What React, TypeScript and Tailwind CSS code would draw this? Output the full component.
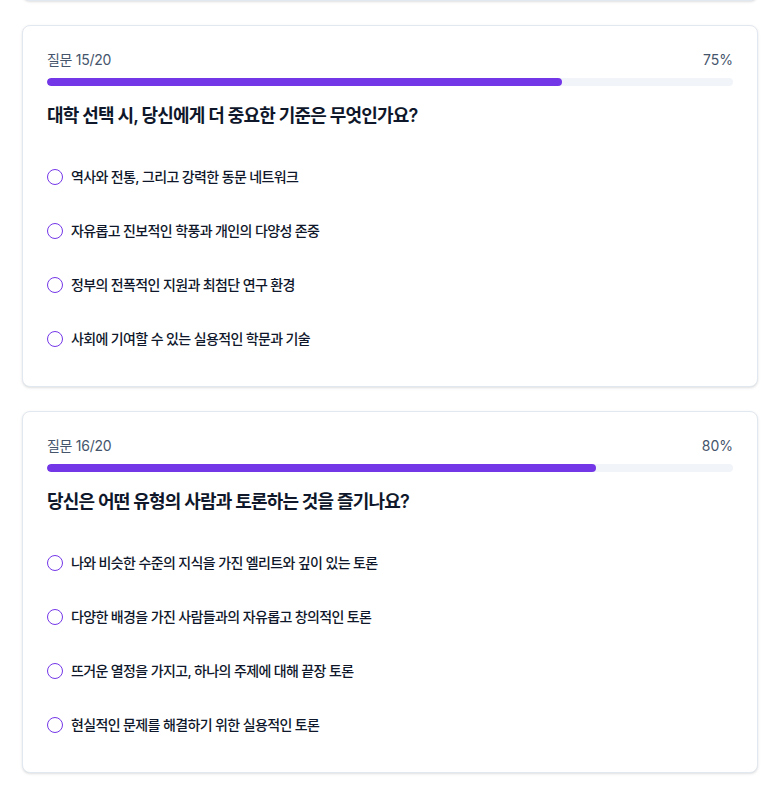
import React from "react";

type Question = {
  no: number;
  title: string;
  options: string[];
};

const TOTAL = 20;

const questions: Question[] = [
  {
    no: 15,
    title: "대학 선택 시, 당신에게 더 중요한 기준은 무엇인가요?",
    options: [
      "역사와 전통, 그리고 강력한 동문 네트워크",
      "자유롭고 진보적인 학풍과 개인의 다양성 존중",
      "정부의 전폭적인 지원과 최첨단 연구 환경",
      "사회에 기여할 수 있는 실용적인 학문과 기술",
    ],
  },
  {
    no: 16,
    title: "당신은 어떤 유형의 사람과 토론하는 것을 즐기나요?",
    options: [
      "나와 비슷한 수준의 지식을 가진 엘리트와 깊이 있는 토론",
      "다양한 배경을 가진 사람들과의 자유롭고 창의적인 토론",
      "뜨거운 열정을 가지고, 하나의 주제에 대해 끝장 토론",
      "현실적인 문제를 해결하기 위한 실용적인 토론",
    ],
  },
];

const QuestionCard = ({ q }: { q: Question }) => {
  const percent = Math.round((q.no / TOTAL) * 100);

  return (
    <div className="bg-white border border-slate-200 rounded-lg shadow-sm p-6">
      {/* Progress */}
      <div className="flex items-center justify-between text-sm text-slate-600 mb-2">
        <span className="tracking-[-0.02em]">
          질문 {q.no}/{TOTAL}
        </span>
        <span>{percent}%</span>
      </div>
      <div className="h-2 w-full rounded-full bg-slate-100 overflow-hidden">
        <div
          className="h-full rounded-full bg-[#7437e8]"
          style={{ width: `${percent}%` }}
        />
      </div>

      <h2 className="mt-4 mb-6 text-lg leading-7 font-semibold text-slate-900 tracking-[-0.045em]">
        {q.title}
      </h2>

      <div className="flex flex-col gap-2">
        {q.options.map((opt) => (
          <label
            key={opt}
            className="flex items-center gap-2 h-[46px] cursor-pointer"
          >
            <span className="w-4 h-4 rounded-full border-[1.5px] border-[#7437e8] shrink-0" />
            <span className="text-sm font-medium text-slate-900 tracking-[-0.045em]">
              {opt}
            </span>
          </label>
        ))}
      </div>
    </div>
  );
};

export default function App() {
  return (
    <div
      className="min-h-screen bg-white overflow-hidden"
      style={{ fontFamily: "Inter, 'Noto Sans CJK KR', sans-serif" }}
    >
      <div className="pl-[22px] pr-[18px] flex flex-col gap-6 pb-6">
        {/* bottom edge of the previous card, scrolled out of view */}
        <div className="-mt-[12px] h-[13px] bg-white border border-t-0 border-slate-200 rounded-b-lg shadow-sm" />
        {questions.map((q) => (
          <QuestionCard key={q.no} q={q} />
        ))}
      </div>
    </div>
  );
}
